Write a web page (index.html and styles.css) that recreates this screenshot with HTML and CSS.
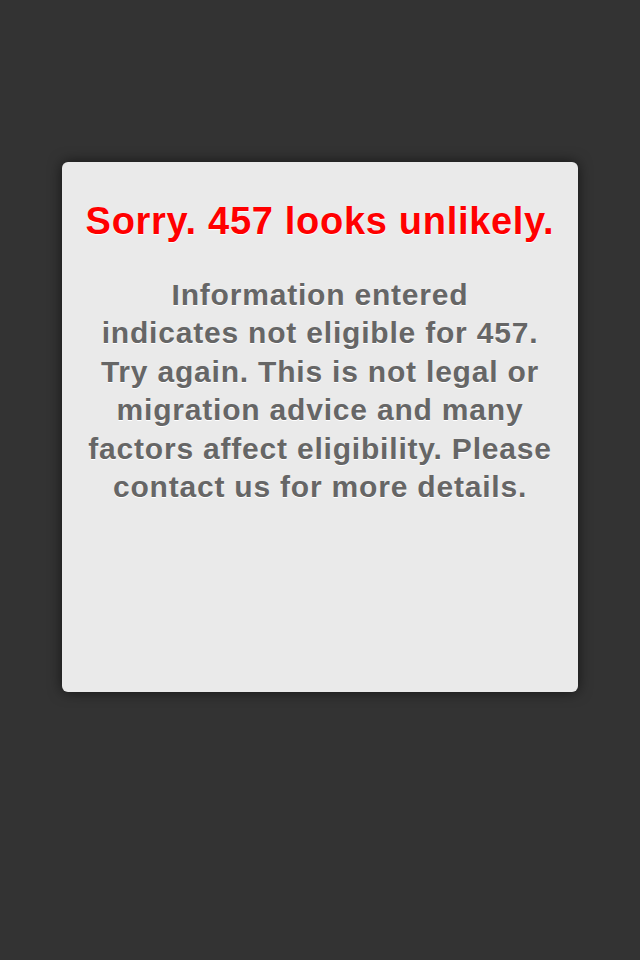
FILE: index.html
```html
<!DOCTYPE html>
<html lang="en">
<head>
    <meta charset="UTF-8">
    <title>457 Check</title>
    <link rel="stylesheet" href="styles.css">
</head>
<body>
<div class="page">
    <div class="result">
        <h1 class="result-title">Sorry. 457 looks unlikely.</h1>
        <p class="result-text">Information entered<br>indicates not eligible for 457. Try again. This is not legal or migration advice and many factors affect eligibility. Please contact us for more details.</p>
    </div>
</div>
</body>
</html>
```

FILE: styles.css
```css
* {
    padding: 0;
    margin: 0;
}

html,
body {
    height: 100%;
}

body {
    background: #333;
    font-family: "Liberation Sans", Arial, sans-serif;
}

.page {
    padding-top: 162px;
}

.result {
    width: 516px;
    height: 530px;
    margin: 0 auto;
    background: #eaeaea;
    border-radius: 6px;
    box-shadow: 0 0 14px rgba(0, 0, 0, 0.6);
    padding: 35px 20px 0;
    box-sizing: border-box;
    text-align: center;
}

.result-title {
    font-size: 38px;
    font-weight: bold;
    letter-spacing: 0.7px;
    color: #ff0000;
    line-height: 48px;
    text-shadow: 0 1px 1px #fff;
}

.result-text {
    margin-top: 31px;
    font-size: 30px;
    font-weight: bold;
    letter-spacing: 0.8px;
    color: #666;
    line-height: 38.4px;
    text-shadow: 0 1px 0 #fff;
}
```
